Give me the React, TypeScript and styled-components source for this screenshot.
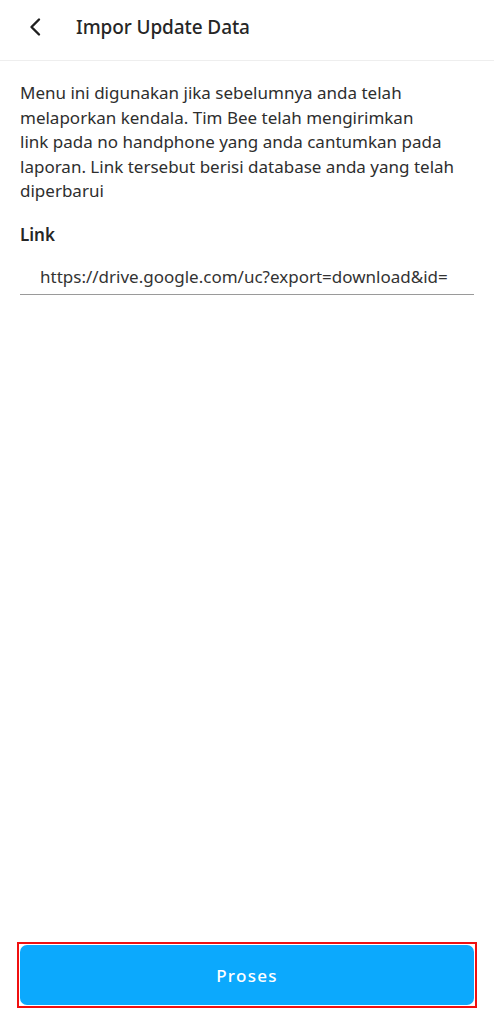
import React from "react";
import styled, { createGlobalStyle } from "styled-components";

const Global = createGlobalStyle`
  html, body { margin: 0; padding: 0; background: #ffffff; }
  body { font-family: "Noto Sans", "Open Sans", sans-serif; color: #2b2b2b; }
  #root { min-height: 1024px; }
`;

const Page = styled.div`
  display: flex;
  flex-direction: column;
  width: 494px;
  height: 1024px;
  background: #fff;
`;

const Header = styled.header`
  display: flex;
  align-items: center;
  height: 61px;
  padding-left: 25px;
  padding-bottom: 7px;
  border-bottom: 1px solid #eeeeee;
  box-sizing: border-box;
`;

const BackButton = styled.button`
  display: flex;
  align-items: center;
  justify-content: center;
  width: 20px;
  height: 24px;
  padding: 0;
  margin-right: 31px;
  border: 0;
  background: none;
  color: #1f1f1f;
`;

const Title = styled.h1`
  margin: 0;
  font-size: 19px;
  font-weight: 500;
  color: #262626;
  letter-spacing: -0.1px;
`;

const Content = styled.main`
  flex: 1;
  display: flex;
  flex-direction: column;
  padding: 20px 20px 0 20px;
`;

const Description = styled.p`
  margin: 0;
  font-size: 17px;
  line-height: 24.5px;
  color: #2e2e2e;
`;

const Label = styled.label`
  margin-top: 19px;
  font-size: 17px;
  font-weight: 600;
  color: #262626;
`;

const Input = styled.input`
  margin-top: 19px;
  width: 100%;
  box-sizing: border-box;
  padding: 0 0 6px 20px;
  border: 0;
  border-bottom: 1px solid #9a9a9a;
  outline: none;
  background: transparent;
  font-family: "Noto Sans", "Open Sans", sans-serif;
  font-size: 17px;
  color: #333333;
`;

const Footer = styled.footer`
  padding: 0 17px 16px 17px;
`;

const Outline = styled.div`
  border: 2px solid #f01010;
  padding: 1px;
`;

const PrimaryButton = styled.button`
  display: block;
  width: 100%;
  height: 60px;
  border: 0;
  border-radius: 7px;
  background: #0ca9fd;
  color: #ffffff;
  font-family: "Noto Sans", "Open Sans", sans-serif;
  font-size: 17px;
  font-weight: 500;
  letter-spacing: 1.3px;
`;

export default function App() {
  return (
    <>
      <Global />
      <Page>
        <Header>
          <BackButton aria-label="Kembali">
            <svg width="14" height="20" viewBox="0 0 14 20" fill="none">
              <path d="M11 2.5 L3.5 10 L11 17.5" stroke="currentColor" strokeWidth="2.4" strokeLinecap="round" strokeLinejoin="round" />
            </svg>
          </BackButton>
          <Title>Impor Update Data</Title>
        </Header>
        <Content>
          <Description>
            Menu ini digunakan jika sebelumnya anda telah
            <br />
            melaporkan kendala. Tim Bee telah mengirimkan
            <br />
            link pada no handphone yang anda cantumkan pada
            <br />
            laporan. Link tersebut berisi database anda yang telah
            <br />
            diperbarui
          </Description>
          <Label htmlFor="link">Link</Label>
          <Input id="link" defaultValue="https://drive.google.com/uc?export=download&id=" />
        </Content>
        <Footer>
          <Outline>
            <PrimaryButton>Proses</PrimaryButton>
          </Outline>
        </Footer>
      </Page>
    </>
  );
}
